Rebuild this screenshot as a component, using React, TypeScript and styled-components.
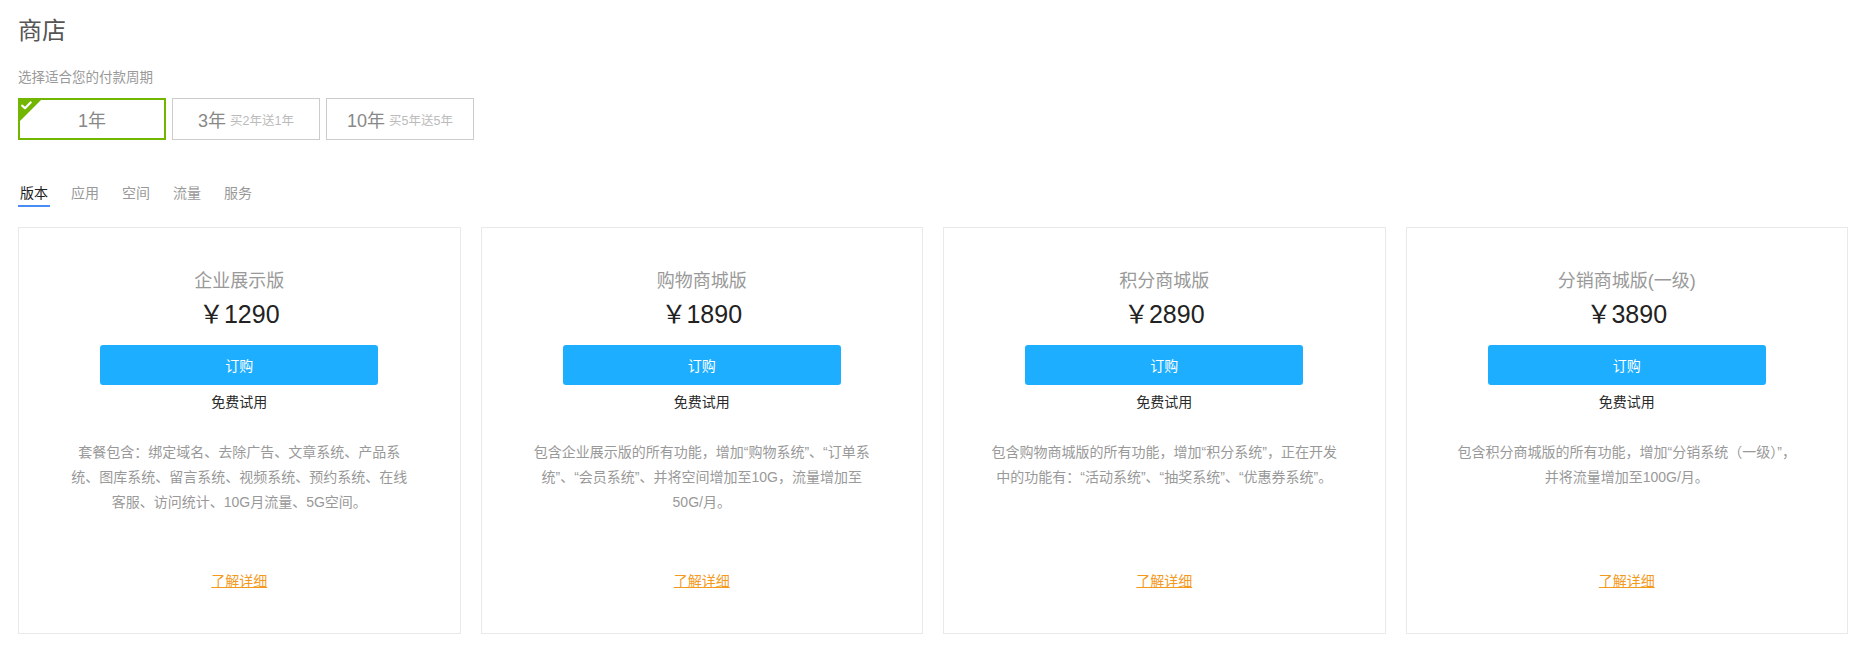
import React, { useState } from "react";
import styled, { createGlobalStyle } from "styled-components";

const GlobalStyle = createGlobalStyle`
  html, body { margin: 0; padding: 0; background: #fff; }
  body { font-family: "Liberation Sans", "Noto Sans CJK SC", sans-serif; color: #333; }
  * { box-sizing: border-box; }
`;

const Page = styled.div`
  padding: 14px 13px 0 18px;
`;

const Title = styled.h1`
  margin: 0;
  font-size: 24px;
  line-height: 34px;
  font-weight: normal;
  color: #555;
`;

const Subtitle = styled.div`
  margin-top: 20px;
  font-size: 13.5px;
  line-height: 20px;
  color: #999;
`;

const PeriodRow = styled.div`
  display: flex;
  gap: 6px;
  margin-top: 10px;
`;

const PeriodBox = styled.button<{ $active?: boolean }>`
  position: relative;
  width: 148px;
  height: 42px;
  display: flex;
  align-items: center;
  justify-content: center;
  background: #fff;
  border: ${(p) => (p.$active ? "2px solid #72b600" : "1px solid #cccccc")};
  padding: 0;
  font-family: inherit;
  cursor: pointer;
  overflow: hidden;
`;

const PeriodMain = styled.span`
  font-size: 18px;
  color: #888;
`;

const PeriodNote = styled.span`
  margin-left: 4px;
  font-size: 12.5px;
  color: #bbb;
`;

const CheckCorner = styled.span`
  position: absolute;
  left: 0;
  top: 0;
  width: 0;
  height: 0;
  border-top: 21px solid #72b600;
  border-right: 21px solid transparent;
`;

const CheckMark = styled.svg`
  position: absolute;
  left: 1px;
  top: 1px;
`;

const Tabs = styled.div`
  display: flex;
  gap: 19px;
  margin-top: 43px;
`;

const Tab = styled.div<{ $active?: boolean }>`
  padding: 0 2px 2px;
  font-size: 14px;
  line-height: 20px;
  color: ${(p) => (p.$active ? "#222" : "#999")};
  border-bottom: 2px solid ${(p) => (p.$active ? "#4a8cf6" : "transparent")};
  cursor: pointer;
`;

const Grid = styled.div`
  display: grid;
  grid-template-columns: repeat(4, 1fr);
  gap: 20px;
  margin-top: 20px;
`;

const Card = styled.div`
  border: 1px solid #e9e9e9;
  padding: 40px 0 42px;
  text-align: center;
  display: flex;
  flex-direction: column;
  align-items: center;
`;

const CardTitle = styled.div`
  font-size: 18px;
  line-height: 27px;
  color: #999;
`;

const Price = styled.div`
  font-size: 25px;
  line-height: 36px;
  color: #222;
  margin-top: 1px;
`;

const OrderButton = styled.button`
  margin-top: 13px;
  width: 278px;
  height: 40px;
  border: none;
  border-radius: 3px;
  background: #1eaeff;
  color: #fff;
  font-family: inherit;
  font-size: 14px;
  cursor: pointer;
`;

const Trial = styled.div`
  margin-top: 7px;
  font-size: 14px;
  line-height: 20px;
  color: #2a2a2a;
`;

const Desc = styled.div`
  margin-top: 28px;
  width: 348px;
  height: 131px;
  font-size: 14px;
  line-height: 25px;
  color: #999;
`;

const More = styled.a`
  font-size: 14px;
  line-height: 20px;
  color: #f39a1e;
  text-decoration: underline;
  cursor: pointer;
`;

const periods = [
  { main: "1年", note: "" },
  { main: "3年", note: "买2年送1年" },
  { main: "10年", note: "买5年送5年" },
];

const tabs = ["版本", "应用", "空间", "流量", "服务"];

const plans = [
  {
    name: "企业展示版",
    price: "1290",
    desc: "套餐包含：绑定域名、去除广告、文章系统、产品系统、图库系统、留言系统、视频系统、预约系统、在线客服、访问统计、10G月流量、5G空间。",
  },
  {
    name: "购物商城版",
    price: "1890",
    desc: "包含企业展示版的所有功能，增加“购物系统”、“订单系统”、“会员系统”、并将空间增加至10G，流量增加至50G/月。",
  },
  {
    name: "积分商城版",
    price: "2890",
    desc: "包含购物商城版的所有功能，增加“积分系统”，正在开发中的功能有：“活动系统”、“抽奖系统”、“优惠券系统”。",
  },
  {
    name: "分销商城版(一级)",
    price: "3890",
    desc: "包含积分商城版的所有功能，增加“分销系统（一级）”，并将流量增加至100G/月。",
  },
];

export default function App() {
  const [period, setPeriod] = useState(0);
  const [tab, setTab] = useState(0);
  return (
    <Page>
      <GlobalStyle />
      <Title>商店</Title>
      <Subtitle>选择适合您的付款周期</Subtitle>
      <PeriodRow>
        {periods.map((p, i) => (
          <PeriodBox key={p.main} $active={i === period} onClick={() => setPeriod(i)}>
            {i === period && (
              <>
                <CheckCorner />
                <CheckMark width="11" height="9" viewBox="0 0 11 9">
                  <path d="M1.2 4.6 L4 7.2 L9.6 1.4" fill="none" stroke="#fff" strokeWidth="2.2" strokeLinecap="round" strokeLinejoin="round" />
                </CheckMark>
              </>
            )}
            <PeriodMain>{p.main}</PeriodMain>
            {p.note && <PeriodNote>{p.note}</PeriodNote>}
          </PeriodBox>
        ))}
      </PeriodRow>
      <Tabs>
        {tabs.map((t, i) => (
          <Tab key={t} $active={i === tab} onClick={() => setTab(i)}>
            {t}
          </Tab>
        ))}
      </Tabs>
      <Grid>
        {plans.map((p) => (
          <Card key={p.name}>
            <CardTitle>{p.name}</CardTitle>
            <Price>￥{p.price}</Price>
            <OrderButton>订购</OrderButton>
            <Trial>免费试用</Trial>
            <Desc>{p.desc}</Desc>
            <More>了解详细</More>
          </Card>
        ))}
      </Grid>
    </Page>
  );
}
